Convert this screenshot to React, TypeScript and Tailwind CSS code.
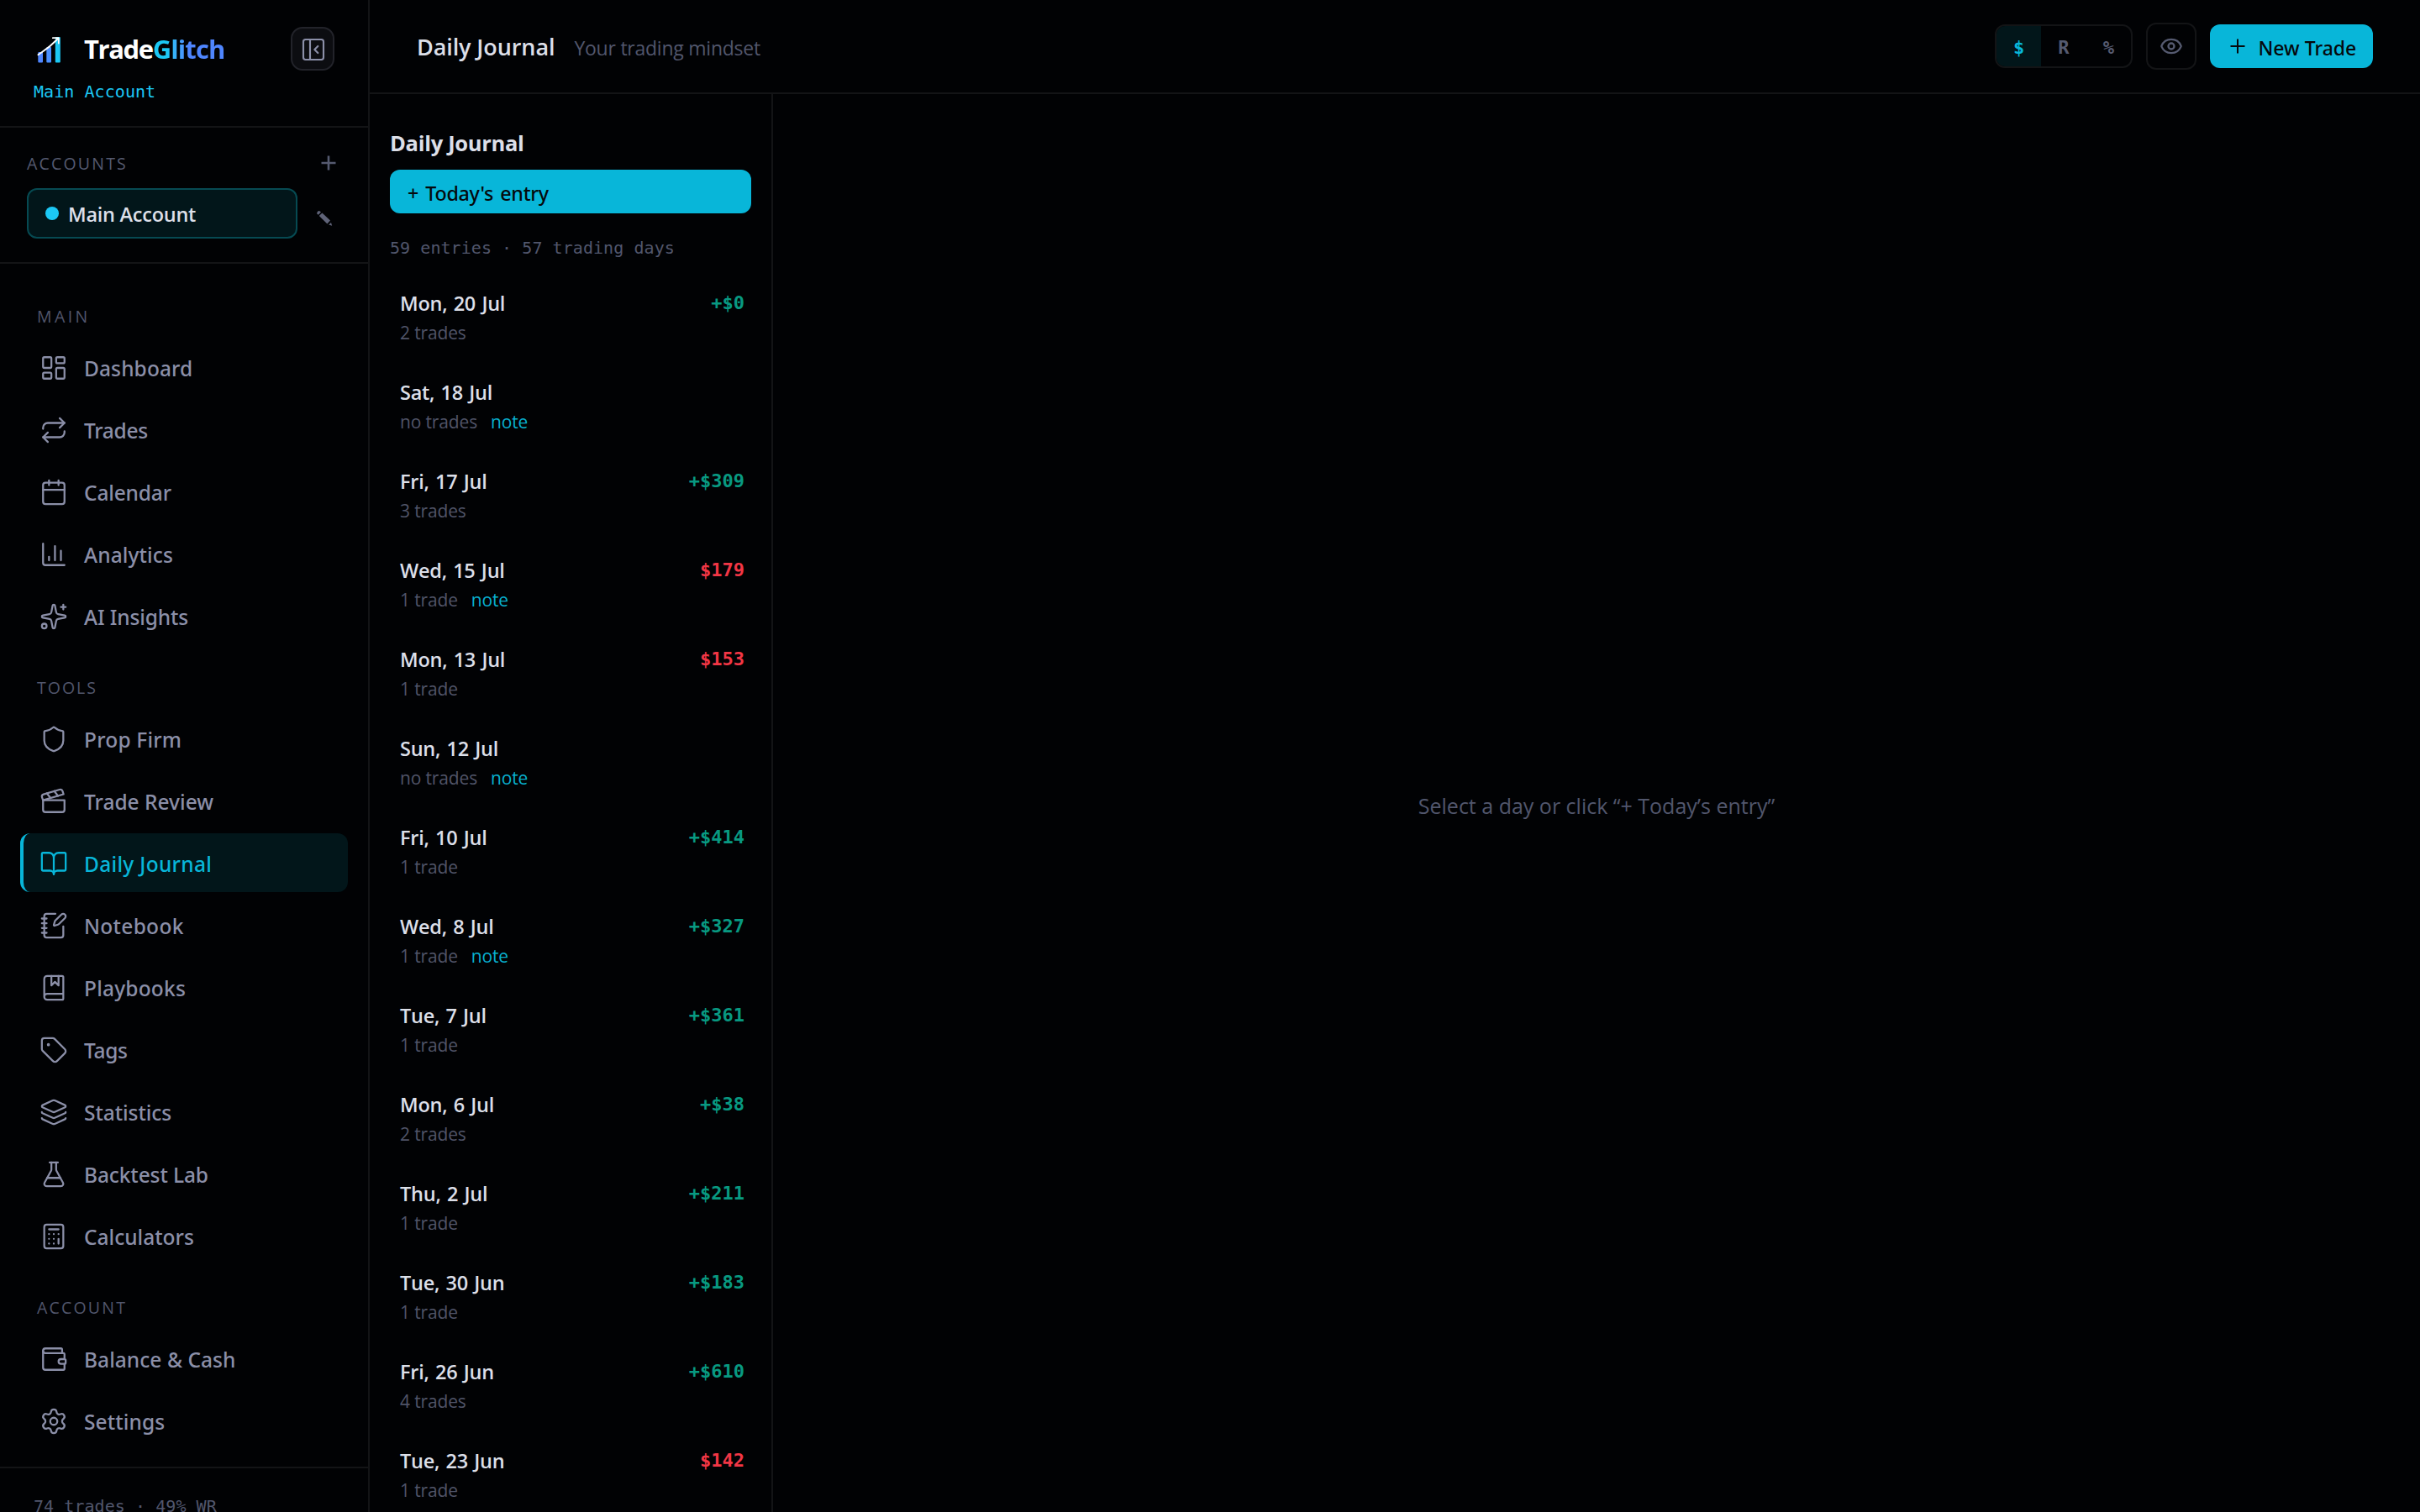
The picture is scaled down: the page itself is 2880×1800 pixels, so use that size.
import React from "react";
import {
  LayoutDashboard, Repeat, Calendar, ChartColumn, Sparkles, Shield, Clapperboard, BookOpen, NotebookPen,
  BookMarked, Tag, Layers, FlaskConical, Calculator, Wallet, Settings, PanelLeftClose, Eye, type LucideIcon,
} from "lucide-react";

type NavItem = { label: string; icon: LucideIcon; tracking: string };

const GROUPS: { title: string; tracking: string; items: NavItem[] }[] = [
  {
    title: "MAIN",
    tracking: "tracking-[3.4px]",
    items: [
      { label: "Dashboard", icon: LayoutDashboard, tracking: "tracking-[0.1px]" },
      { label: "Trades", icon: Repeat, tracking: "tracking-[-0.28px]" },
      { label: "Calendar", icon: Calendar, tracking: "tracking-[-0.16px]" },
      { label: "Analytics", icon: ChartColumn, tracking: "tracking-[0.12px]" },
      { label: "AI Insights", icon: Sparkles, tracking: "tracking-[-0.13px]" },
    ],
  },
  {
    title: "TOOLS",
    tracking: "tracking-[2px]",
    items: [
      { label: "Prop Firm", icon: Shield, tracking: "tracking-[0.2px]" },
      { label: "Trade Review", icon: Clapperboard, tracking: "tracking-[0px]" },
      { label: "Daily Journal", icon: BookOpen, tracking: "tracking-[0.3px]" },
      { label: "Notebook", icon: NotebookPen, tracking: "tracking-[0.3px]" },
      { label: "Playbooks", icon: BookMarked, tracking: "tracking-[0.2px]" },
      { label: "Tags", icon: Tag, tracking: "tracking-[-0.34px]" },
      { label: "Statistics", icon: Layers, tracking: "tracking-[-0.06px]" },
      { label: "Backtest Lab", icon: FlaskConical, tracking: "tracking-[-0.1px]" },
      { label: "Calculators", icon: Calculator, tracking: "tracking-[0px]" },
    ],
  },
  {
    title: "ACCOUNT",
    tracking: "tracking-[2.2px]",
    items: [
      { label: "Balance & Cash", icon: Wallet, tracking: "tracking-[0.05px]" },
      { label: "Settings", icon: Settings, tracking: "tracking-[0.1px]" },
    ],
  },
];

type Entry = { date: string; trades: string; pnl?: string; note?: boolean };

const ENTRIES: Entry[] = [
  { date: "Mon, 20 Jul", trades: "2 trades", pnl: "+$0" },
  { date: "Sat, 18 Jul", trades: "no trades", note: true },
  { date: "Fri, 17 Jul", trades: "3 trades", pnl: "+$309" },
  { date: "Wed, 15 Jul", trades: "1 trade", pnl: "$179", note: true },
  { date: "Mon, 13 Jul", trades: "1 trade", pnl: "$153" },
  { date: "Sun, 12 Jul", trades: "no trades", note: true },
  { date: "Fri, 10 Jul", trades: "1 trade", pnl: "+$414" },
  { date: "Wed, 8 Jul", trades: "1 trade", pnl: "+$327", note: true },
  { date: "Tue, 7 Jul", trades: "1 trade", pnl: "+$361" },
  { date: "Mon, 6 Jul", trades: "2 trades", pnl: "+$38" },
  { date: "Thu, 2 Jul", trades: "1 trade", pnl: "+$211" },
  { date: "Tue, 30 Jun", trades: "1 trade", pnl: "+$183" },
  { date: "Fri, 26 Jun", trades: "4 trades", pnl: "+$610" },
  { date: "Tue, 23 Jun", trades: "1 trade", pnl: "$142" },
];

const MONO = "font-['DejaVu_Sans_Mono',monospace]";
const MEDIUM = "font-['Noto_Sans',sans-serif] font-medium";

function Logo() {
  return (
    <svg width="36" height="36" viewBox="0 0 36 36" fill="none">
      <rect x="5.3" y="22" width="5.7" height="12.5" rx="1" fill="#4f86ff" />
      <rect x="15.3" y="16" width="5.7" height="18.5" rx="1" fill="#4a8fff" />
      <rect x="25.8" y="4" width="6" height="30.5" rx="1" fill="#1cc8f5" />
      <path d="M5.4 25.2C12 20.5 18 17.5 29 6" stroke="#fff" strokeWidth="1.9" strokeLinecap="round" />
      <path d="M22.8 5.2H29.8V11.6" stroke="#fff" strokeWidth="1.7" strokeLinecap="round" strokeLinejoin="round" />
    </svg>
  );
}

function Sidebar() {
  return (
    <aside className="flex h-full w-[440px] shrink-0 flex-col border-r-2 border-[#131416]">
      <div className="h-[152px] shrink-0 border-b-2 border-[#131416] px-10 pt-8">
        <div className="flex h-[52px] items-center">
          <Logo />
          <div className="ml-6 flex-1 text-[31px] leading-[40px] font-bold tracking-[-1.4px] text-white">
            Trade
            <span className="bg-gradient-to-r from-[#1cc8f5] from-20% to-[#4f86ff] to-50% bg-clip-text tracking-[-0.9px] text-transparent">
              Glitch
            </span>
          </div>
          <button className="flex size-[52px] items-center justify-center rounded-[14px] border-2 border-[#22232a] bg-[#0c0d11] text-[#8b8fa8]">
            <PanelLeftClose size={32} strokeWidth={1.6} className="mt-[1px] ml-[1px]" />
          </button>
        </div>
        <div className={`mt-[11px] text-[20px] leading-7 tracking-[0.06px] text-[#1cc8f5] ${MONO}`}>Main Account</div>
      </div>

      <div className="h-[162px] shrink-0 border-b-2 border-[#131416] px-8 pt-7">
        <div className="flex h-7 items-center justify-between pr-1.5 text-[#555a70]">
          <span className="pt-[2px] text-[19.5px] leading-7 tracking-[2.2px]">ACCOUNTS</span>
          <svg width="18" height="18" viewBox="0 0 18 18" stroke="currentColor" strokeWidth="2.6">
            <path d="M9 .5v17M.5 9h17" />
          </svg>
        </div>
        <div className="mt-4 flex">
          <div className="flex h-[60px] w-[322px] items-center rounded-[12px] border-2 border-[#064a52] bg-[#02161a] pl-5">
            <span className="size-4 rounded-full bg-[#1cc8f5]" />
            <span className="ml-[11px] pt-[2px] text-[23.5px] leading-8 font-semibold tracking-[-0.26px] text-[#dcdfe8]">
              Main Account
            </span>
          </div>
          <svg width="20" height="20" viewBox="0 0 20 20" className="mt-[26px] ml-[22px]" fill="#5f6378">
            <path d="M1.2 3.8a2.6 2.6 0 0 1 3.2-2.6l1.6 1.2L2.9 5.8l-1.5-1.2z" />
            <path d="M3.8 7 7.4 3.4 17 12.6 13.4 16.4z" />
            <path d="M15.2 17.6 18 15 19.2 18.8z" />
          </svg>
        </div>
      </div>

      <nav className="flex flex-1 flex-col gap-9 px-6 pt-12">
        {GROUPS.map((group) => (
          <section key={group.title}>
            <h2 className={`mb-[11px] pt-[1px] pl-5 text-[19.5px] leading-7 text-[#51566c] ${group.tracking}`}>
              {group.title}
            </h2>
            <ul className="flex flex-col gap-1">
              {group.items.map(({ label, icon: Icon, tracking }) => {
                const active = label === "Daily Journal";
                return (
                  <li
                    key={label}
                    className={`flex h-[70px] items-center rounded-[12px] border-l-4 pl-[19px] ${
                      active ? "border-[#08b6d9] bg-[#02161a] text-[#08b6d9]" : "border-transparent text-[#8b8fa8]"
                    }`}
                  >
                    <Icon size={34} strokeWidth={1.6} className="mt-[2px]" />
                    <span className={`ml-[19px] pt-[4px] text-[24.5px] leading-9 ${MEDIUM} ${tracking}`}>{label}</span>
                  </li>
                );
              })}
            </ul>
          </section>
        ))}
      </nav>

      <div
        className={`h-[54px] shrink-0 overflow-hidden border-t-2 border-[#131416] px-10 pt-[31px] text-[20px] leading-7 tracking-[0.06px] whitespace-nowrap text-[#51566c] ${MONO}`}
      >
        74 trades · 49% WR
      </div>
    </aside>
  );
}

function TopBar() {
  return (
    <header className="flex h-[112px] shrink-0 items-center border-b-2 border-[#131416] pr-14 pl-14">
      <h1 className="pt-[1px] text-[27px] leading-10 font-semibold tracking-[-0.1px] text-[#dcdfe8]">Daily Journal</h1>
      <span className="ml-[23px] pt-[4px] text-[23px] leading-10 tracking-[-0.24px] text-[#51566c]">Your trading mindset</span>
      <div
        className={`ml-auto flex h-[52px] w-[164px] overflow-hidden rounded-[12px] border-2 border-[#131416] text-[22px] font-bold text-[#555a70] ${MONO}`}
      >
        <span className="flex flex-1 items-center justify-center bg-[#02161a] pt-[2px] text-[#08b6d9]">$</span>
        <span className="flex flex-1 items-center justify-center pt-[2px]">R</span>
        <span className="flex flex-1 items-center justify-center pt-[2px]">%</span>
      </div>
      <button className="ml-4 flex h-14 w-[60px] items-center justify-center rounded-[12px] border-2 border-[#131416] text-[#555a70]">
        <Eye size={28} strokeWidth={2} />
      </button>
      <button className="ml-4 flex h-[52px] w-[194px] items-center rounded-[12px] bg-[#08b6d9] pl-6 text-[#05090c]">
        <svg width="18" height="18" viewBox="0 0 18 18" stroke="currentColor" strokeWidth="2">
          <path d="M9 .5v17M.5 9h17" />
        </svg>
        <span className={`ml-[15.5px] pt-[3px] text-[23px] leading-8 ${MEDIUM}`}>New Trade</span>
      </button>
    </header>
  );
}

function JournalList() {
  return (
    <section className="flex w-[480px] shrink-0 flex-col border-r-2 border-[#131416] px-6 pt-10">
      <h2 className="text-[25.5px] leading-9 font-bold tracking-[-0.3px] text-[#dcdfe8]">Daily Journal</h2>
      <button
        className={`mt-[14px] flex h-[52px] shrink-0 items-center rounded-[12px] bg-[#08b6d9] pt-[3px] pl-[21px] text-[23.3px] leading-8 tracking-[-0.3px] text-[#05090c] [word-spacing:2.5px] ${MEDIUM}`}
      >
        + Today's entry
      </button>
      <div className={`mt-[27px] text-[20px] leading-7 tracking-[0.06px] text-[#51566c] ${MONO}`}>59 entries · 57 trading days</div>
      <ul className="mt-[34px] pr-2 pl-3">
        {ENTRIES.map((e) => (
          <li key={e.date} className="h-[106px]">
            <div className="flex h-9 items-start justify-between">
              <span className="text-[23.5px] leading-9 font-semibold tracking-[-0.25px] text-[#dcdfe8] [word-spacing:1.5px]">
                {e.date}
              </span>
              {e.pnl && (
                <span
                  className={`pt-[2px] text-[22px] leading-8 font-bold ${MONO} ${
                    e.pnl.startsWith("+") ? "text-[#089981]" : "text-[#f23645]"
                  }`}
                >
                  {e.pnl}
                </span>
              )}
            </div>
            <div className="flex gap-4 pt-[1px] text-[21px] leading-8 tracking-[-0.15px] text-[#505468]">
              <span>{e.trades}</span>
              {e.note && <span className="text-[#08b0cf]">note</span>}
            </div>
          </li>
        ))}
      </ul>
    </section>
  );
}

export default function App() {
  return (
    <div className="flex h-[1800px] w-[2880px] overflow-hidden bg-[#010204] font-['Open_Sans',sans-serif]">
      <Sidebar />
      <div className="flex min-w-0 flex-1 flex-col">
        <TopBar />
        <div className="flex min-h-0 flex-1 overflow-hidden">
          <JournalList />
          <main className="flex flex-1 items-center justify-center text-[25px] leading-9 text-[#51566c]">
            <p className="pt-[5px]">Select a day or click “+ Today’s entry”</p>
          </main>
        </div>
      </div>
    </div>
  );
}
